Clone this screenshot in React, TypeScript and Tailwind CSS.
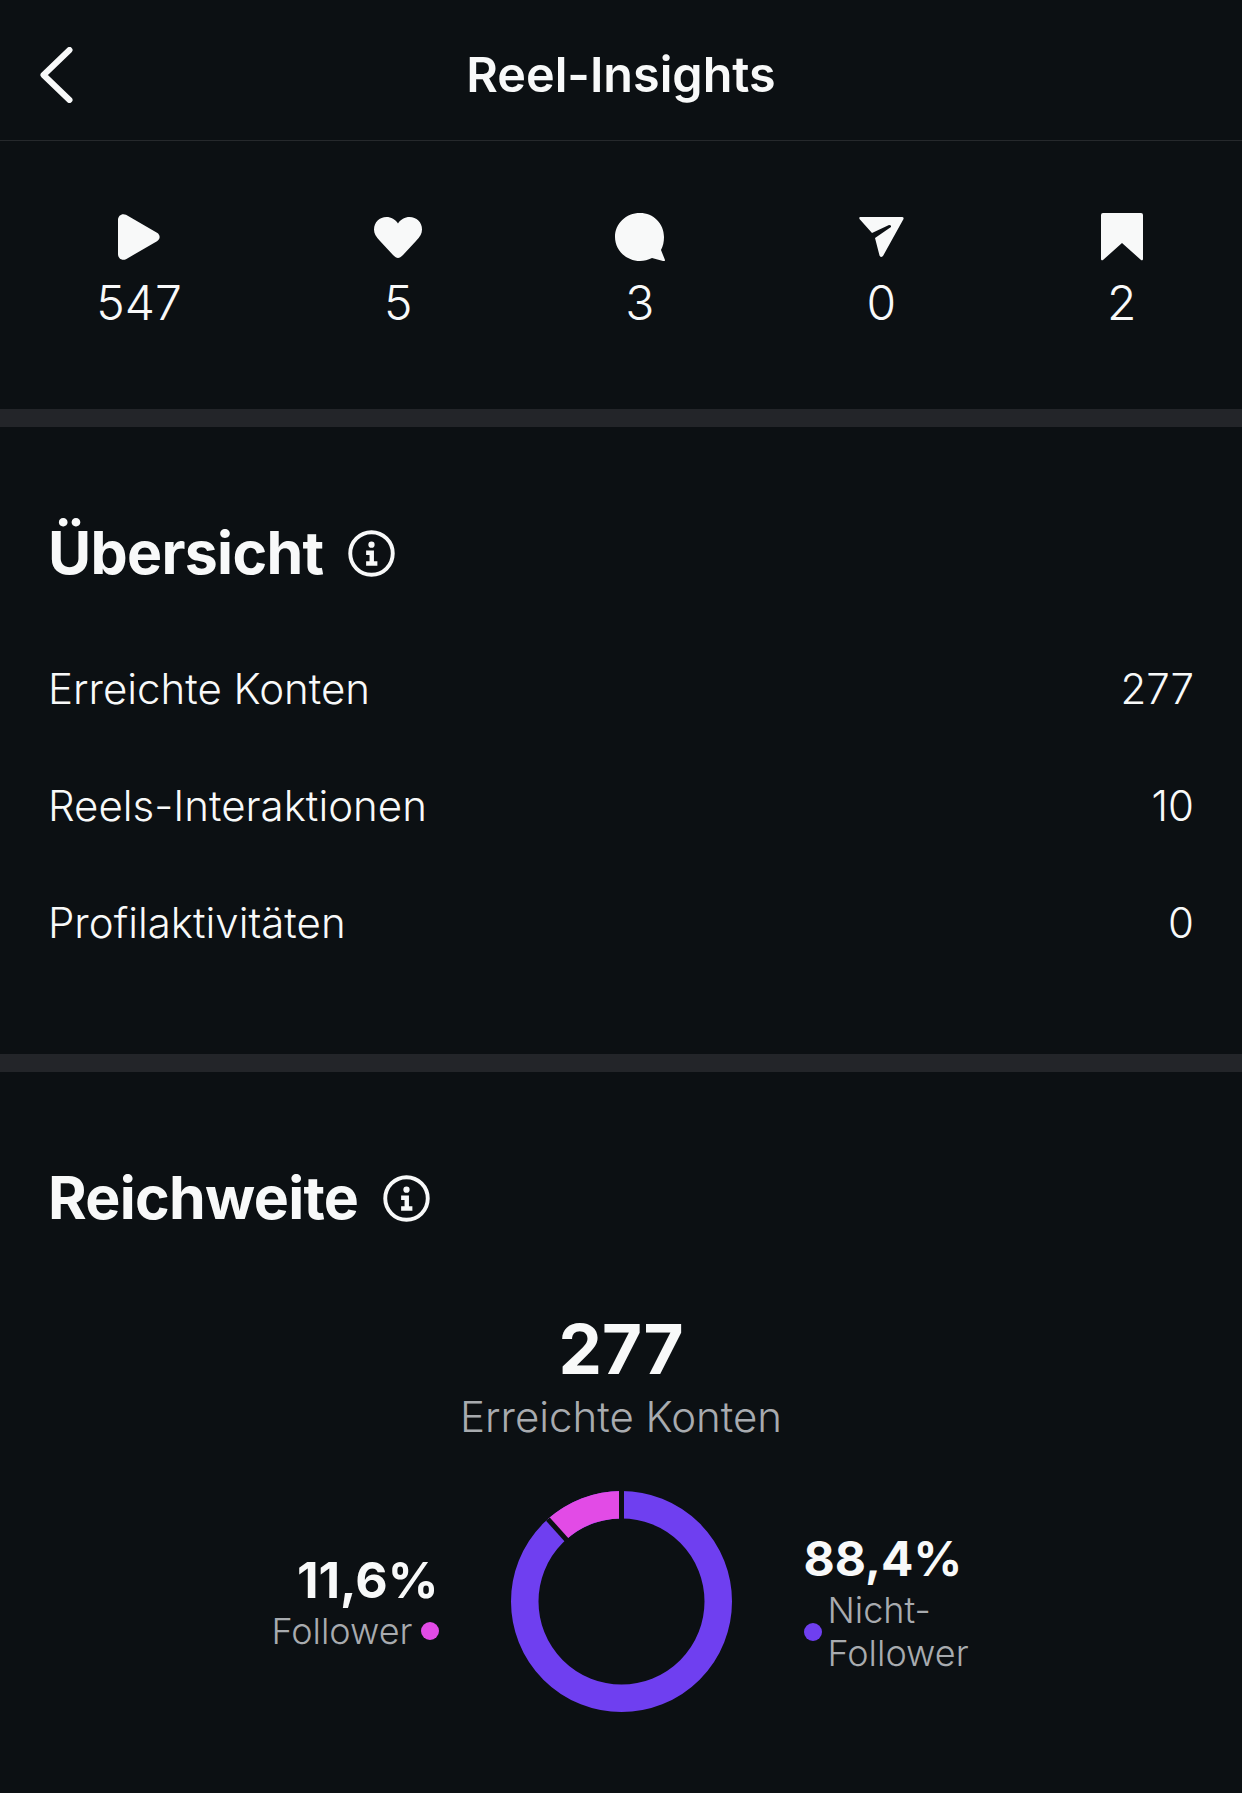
const FONT = "font-['Inter','Liberation_Sans',sans-serif]";

function BackIcon() {
  return (
    <svg width="33" height="56" viewBox="0 0 33 56" fill="none" stroke="currentColor" strokeWidth="6" strokeLinecap="round" strokeLinejoin="round">
      <path d="M29.5 3 3.5 28l26 25" />
    </svg>
  );
}

function PlayIcon() {
  return (
    <svg width="42" height="46" viewBox="0 0 42 46" fill="currentColor">
      <path d="M0 6C0 1.5 4-1 8 .8l31 18c3.500 2 3.500 6.400 0 8.400l-31 18C4 47 0 44.500 0 40Z" />
    </svg>
  );
}

function HeartIcon() {
  return (
    <svg width="48" height="41" viewBox="0 0 48 41" fill="currentColor">
      <path d="M24 41c-1.500 0-3-1-5-3L6 24C2 20 0 16.500 0 12.500 0 5 5.500 0 12.500 0 17 0 21.500 2.500 24 6.500 26.500 2.500 31 0 35.500 0 42.500 0 48 5 48 12.500c0 4-2 7.500-6 11.500L29 38c-2 2-3.500 3-5 3Z" />
    </svg>
  );
}

function CommentIcon() {
  return (
    <svg width="50" height="48" viewBox="0 0 50 48" fill="currentColor">
      <path d="M25 0c13.500 0 24 10.500 24 24 0 5-1 9-3 13l4 10q0 1.500-2 1l-11-3c-4 2-8 3-12 3C11 48 0 37 0 24 0 10.500 11 0 25 0Z" />
    </svg>
  );
}

function SendIcon() {
  return (
    <svg width="45" height="41" viewBox="0 0 45 41" fill="currentColor">
      <path d="M1 0h42q2 0 1.500 2L24 39q-2.500 2-3.500-.5L16 21l16-11q.5-2-2-2L13 16 .5 2Q0 0 1 0Z" />
    </svg>
  );
}

function BookmarkIcon() {
  return (
    <svg width="42" height="48" viewBox="0 0 42 48" fill="currentColor">
      <path d="M2 0h38a2 2 0 0 1 2 2v44a1.200 1.200 0 0 1-2 1L21 30 2 47a1.200 1.200 0 0 1-2-1V2a2 2 0 0 1 2-2Z" />
    </svg>
  );
}

function InfoIcon() {
  return (
    <svg width="47" height="47" viewBox="0 0 48 48" fill="none">
      <circle cx="24" cy="24" r="21.700" stroke="currentColor" strokeWidth="4" />
      <circle cx="24" cy="15" r="3.200" fill="currentColor" />
      <path d="M18.500 21h8v11h3.500v4.500H18.500V32H22v-6.500h-3.500Z" fill="currentColor" />
    </svg>
  );
}

function Donut() {
  return (
    <svg width="221" height="221" viewBox="0 0 221 221" fill="none">
      <circle cx="110.500" cy="110.500" r="96.750" stroke="#6f3ff0" strokeWidth="27.500" />
      <circle
        cx="110.500"
        cy="110.500"
        r="96.750"
        stroke="#e24be6"
        strokeWidth="27.500"
        pathLength={100}
        strokeDasharray="11.600 88.400"
        transform="rotate(-131.760 110.500 110.500)"
      />
      <path d="M110.500 0v30" stroke="#0c1013" strokeWidth="5" />
      <path d="M110.500 0v30" stroke="#0c1013" strokeWidth="5" transform="rotate(-41.760 110.500 110.500)" />
    </svg>
  );
}

const STATS = [
  { icon: <PlayIcon />, value: '547' },
  { icon: <HeartIcon />, value: '5' },
  { icon: <CommentIcon />, value: '3' },
  { icon: <SendIcon />, value: '0' },
  { icon: <BookmarkIcon />, value: '2' },
];

const OVERVIEW = [
  { label: 'Erreichte Konten', value: '277' },
  { label: 'Reels-Interaktionen', value: '10' },
  { label: 'Profilaktivitäten', value: '0' },
];

function SectionTitle({ children }: { children: string }) {
  return (
    <h2 className="flex items-center gap-[25px] text-[59px] leading-[72px] font-bold tracking-[-0.7px]">
      {children}
      <InfoIcon />
    </h2>
  );
}

export default function App() {
  return (
    <div className={`min-h-screen bg-[#0c1013] text-[#f8f9f9] [font-variant-ligatures:none] ${FONT}`}>
      {/* Header */}
      <div className="grid h-[141px] grid-cols-[1fr_auto_1fr] items-center border-b border-[#26292c] px-[40px] pt-[9px]">
        <BackIcon />
        <h1 className="mt-[2px] text-[48.500px] font-semibold">Reel-Insights</h1>
      </div>

      {/* Stats */}
      <div className="flex h-[268px] justify-around pt-[72px]">
        {STATS.map((stat, i) => (
          <div key={i} className="flex min-w-[48px] flex-col items-center">
            <div className="flex h-[48px] items-center justify-center">{stat.icon}</div>
            <span className="mt-[14px] text-[48px] leading-[56px] font-[350]">{stat.value}</span>
          </div>
        ))}
      </div>
      <div className="h-[18px] bg-[#232529]" />

      {/* Overview */}
      <section className="px-[48px] pt-[90px] pb-[73px]">
        <SectionTitle>Übersicht</SectionTitle>
        <div className="mt-[41px]">
          {OVERVIEW.map(row => (
            <div key={row.label} className="flex h-[117px] items-center justify-between text-[42px] font-[350]">
              <span>{row.label}</span>
              <span>{row.value}</span>
            </div>
          ))}
        </div>
      </section>
      <div className="h-[18px] bg-[#232529]" />

      {/* Reach */}
      <section className="px-[48px] pt-[90px]">
        <SectionTitle>Reichweite</SectionTitle>
        <div className="mt-[73px] flex flex-col items-center">
          <span className="text-[69px] leading-[84px] font-bold">277</span>
          <span className="mt-[1px] text-[42px] leading-[50px] font-[350] text-[#a8abaf]">Erreichte Konten</span>
        </div>
        <div className="mt-[49px] grid grid-cols-[1fr_auto_1fr] items-center gap-[72px]">
          <div className="flex flex-col items-end">
            <span className="text-[50px] leading-[58px] font-bold">11,6%</span>
            <div className="mt-[1px] flex items-center gap-[8px] text-[36px] leading-[43px] font-[350] text-[#a8abaf]">
              <span>Follower</span>
              <span className="h-[18px] w-[18px] rounded-full bg-[#e24be6]" />
            </div>
          </div>
          <Donut />
          <div className="mt-[2px] flex flex-col items-start">
            <span className="text-[48px] leading-[58px] font-bold">88,4%</span>
            <div className="mt-[1px] flex items-center gap-[6px] text-[36px] leading-[43px] font-[350] text-[#a8abaf]">
              <span className="h-[18px] w-[18px] rounded-full bg-[#6f3ff0]" />
              <span>
                Nicht-
                <br />
                Follower
              </span>
            </div>
          </div>
        </div>
      </section>
    </div>
  );
}
